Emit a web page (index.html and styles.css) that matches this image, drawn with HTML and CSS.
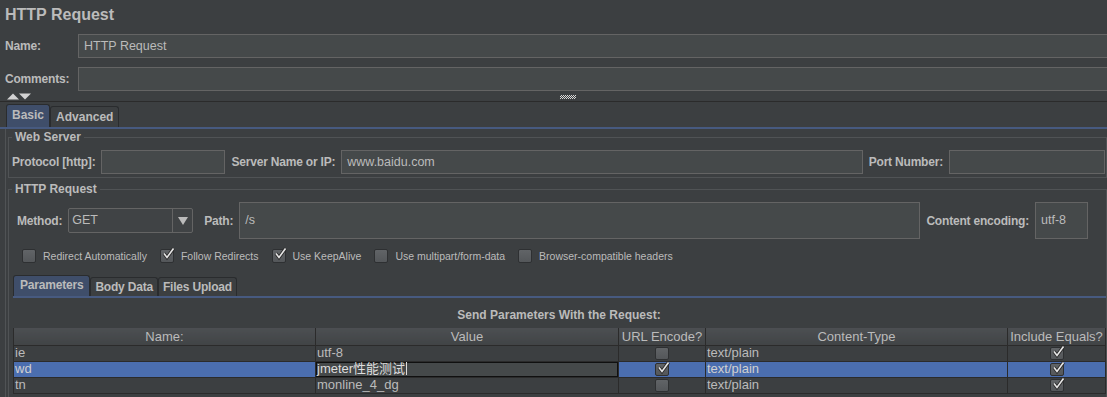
FILE: index.html
```html
<!DOCTYPE html>
<html lang="en">
<head>
  <meta charset="UTF-8">
  <meta name="viewport" content="width=device-width, initial-scale=1.0">
  <title>HTTP Request</title>
  <link rel="stylesheet" href="styles.css">
</head>
<body>
  <div class="title">HTTP Request</div>

  <div class="form-row">
    <label class="row-label">Name:</label>
    <div class="field wide">HTTP Request</div>
  </div>
  <div class="form-row">
    <label class="row-label">Comments:</label>
    <div class="field wide"></div>
  </div>

  <div class="splitter">
    <svg class="arrows" width="24" height="7" viewBox="0 0 24 7">
      <polygon points="0,6.5 6,0.5 12,6.5" fill="#d2d2d2"/>
      <polygon points="12,0.5 24,0.5 18,6.5" fill="#d2d2d2"/>
    </svg>
    <span class="grip"></span>
  </div>

  <div class="tabs">
    <div class="tab active">Basic</div>
    <div class="tab">Advanced</div>
  </div>

  <div class="tab-body">
    <fieldset class="group">
      <legend>Web Server</legend>
      <div class="line">
        <label>Protocol [http]:</label>
        <div class="field protocol"></div>
        <label>Server Name or IP:</label>
        <div class="field grow">www.baidu.com</div>
        <label>Port Number:</label>
        <div class="field port"></div>
      </div>
    </fieldset>

    <fieldset class="group">
      <legend>HTTP Request</legend>
      <div class="line method-line">
        <label>Method:</label>
        <div class="combo">
          <span class="combo-text">GET</span>
          <span class="combo-btn">
            <svg width="10" height="8" viewBox="0 0 10 8"><polygon points="0,0 10,0 5,8" fill="#bbbbbb"/></svg>
          </span>
        </div>
        <label class="path-label">Path:</label>
        <div class="field grow tall">/s</div>
        <label>Content encoding:</label>
        <div class="field tall encoding">utf-8</div>
      </div>

      <div class="options">
        <span class="opt"><i class="box"></i>Redirect Automatically</span>
        <span class="opt"><i class="box"><svg width="14" height="14" viewBox="0 0 14 14"><path d="M3 6.5 L6 10.5 L12.5 1.5" fill="none" stroke="#2a2a2a" stroke-width="3.4"/><path d="M3 6.5 L6 10.5 L12.5 1.5" fill="none" stroke="#e6e6e6" stroke-width="1.6"/></svg></i>Follow Redirects</span>
        <span class="opt"><i class="box"><svg width="14" height="14" viewBox="0 0 14 14"><path d="M3 6.5 L6 10.5 L12.5 1.5" fill="none" stroke="#2a2a2a" stroke-width="3.4"/><path d="M3 6.5 L6 10.5 L12.5 1.5" fill="none" stroke="#e6e6e6" stroke-width="1.6"/></svg></i>Use KeepAlive</span>
        <span class="opt"><i class="box"></i>Use multipart/form-data</span>
        <span class="opt"><i class="box"></i>Browser-compatible headers</span>
      </div>

      <div class="tabs inner">
        <div class="tab active">Parameters</div>
        <div class="tab">Body Data</div>
        <div class="tab">Files Upload</div>
      </div>

      <div class="params">
        <div class="params-title">Send Parameters With the Request:</div>
        <table class="params-table">
          <colgroup>
            <col style="width: 302px">
            <col style="width: 303px">
            <col style="width: 87px">
            <col style="width: 302px">
            <col style="width: 98px">
          </colgroup>
          <thead>
            <tr>
              <th>Name:</th>
              <th>Value</th>
              <th>URL Encode?</th>
              <th>Content-Type</th>
              <th>Include Equals?</th>
            </tr>
          </thead>
          <tbody>
            <tr>
              <td>ie</td>
              <td>utf-8</td>
              <td class="check-cell"><i class="box small"></i></td>
              <td>text/plain</td>
              <td class="check-cell"><i class="box small"><svg width="14" height="14" viewBox="0 0 14 14"><path d="M3 6.5 L6 10.5 L12.5 1.5" fill="none" stroke="#2a2a2a" stroke-width="3.4"/><path d="M3 6.5 L6 10.5 L12.5 1.5" fill="none" stroke="#e6e6e6" stroke-width="1.6"/></svg></i></td>
            </tr>
            <tr class="selected">
              <td>wd</td>
              <td class="editing">jmeter性能测试<span class="caret"></span></td>
              <td class="check-cell"><i class="box small"><svg width="14" height="14" viewBox="0 0 14 14"><path d="M3 6.5 L6 10.5 L12.5 1.5" fill="none" stroke="#2a2a2a" stroke-width="3.4"/><path d="M3 6.5 L6 10.5 L12.5 1.5" fill="none" stroke="#e6e6e6" stroke-width="1.6"/></svg></i></td>
              <td>text/plain</td>
              <td class="check-cell"><i class="box small"><svg width="14" height="14" viewBox="0 0 14 14"><path d="M3 6.5 L6 10.5 L12.5 1.5" fill="none" stroke="#2a2a2a" stroke-width="3.4"/><path d="M3 6.5 L6 10.5 L12.5 1.5" fill="none" stroke="#e6e6e6" stroke-width="1.6"/></svg></i></td>
            </tr>
            <tr>
              <td>tn</td>
              <td>monline_4_dg</td>
              <td class="check-cell"><i class="box small"></i></td>
              <td>text/plain</td>
              <td class="check-cell"><i class="box small"><svg width="14" height="14" viewBox="0 0 14 14"><path d="M3 6.5 L6 10.5 L12.5 1.5" fill="none" stroke="#2a2a2a" stroke-width="3.4"/><path d="M3 6.5 L6 10.5 L12.5 1.5" fill="none" stroke="#e6e6e6" stroke-width="1.6"/></svg></i></td>
            </tr>
          </tbody>
        </table>
      </div>
    </fieldset>
  </div>
</body>
</html>
```

FILE: styles.css
```css
* {
  box-sizing: border-box;
}

body {
  margin: 0;
  width: 1107px;
  height: 397px;
  overflow: hidden;
  background: #3c3f41;
  color: #bbbbbb;
  font-family: "Liberation Sans", Arial, "Noto Sans CJK SC", sans-serif;
  font-size: 12px;
}

label {
  font-weight: bold;
  letter-spacing: -0.2px;
  white-space: nowrap;
}

.title {
  height: 34px;
  padding: 5px 0 0 5px;
  font-size: 16px;
  font-weight: bold;
  line-height: 19px;
}

.form-row {
  display: flex;
  align-items: center;
  padding-left: 5px;
}

.form-row + .form-row {
  margin-top: 9px;
}

.row-label {
  width: 73px;
}

.field {
  height: 24px;
  padding: 0 5px;
  background: #45494a;
  border: 1px solid #646464;
  font-size: 12.5px;
  line-height: 22px;
  white-space: nowrap;
}

.field.wide {
  flex: 1;
  margin-right: -12px;
}

.splitter {
  display: flex;
  align-items: flex-start;
  height: 11px;
  padding: 2px 0 0 7px;
  border-bottom: 1px solid #2b2b2b;
}

.grip {
  width: 16px;
  height: 4px;
  margin: 2px 0 0 529px;
  background: repeating-conic-gradient(#d8d8d8 0 25%, transparent 0 50%) 0 0 / 2px 2px;
}

.tabs {
  display: flex;
  align-items: flex-end;
  height: 25px;
  margin-top: 2px;
  padding-left: 6px;
  border-bottom: 2px solid #475a80;
}

.tab {
  height: 21px;
  padding: 0 5px;
  border: 1px solid #2a2c2e;
  border-bottom: none;
  border-radius: 3px 3px 0 0;
  font-weight: bold;
  line-height: 20px;
  white-space: nowrap;
}

.tab.active {
  height: 23px;
  background: #3f4e6a;
}

.tab-body {
  margin-left: 5px;
  padding: 1px 0 0 2px;
  border-left: 1px solid #505355;
}

.group {
  margin: 0;
  min-width: 0;
  padding: 6px 0 3px 3px;
  border: 1px solid #505355;
}

.group + .group {
  margin-top: 4px;
}

.group legend {
  padding: 0 3px;
  font-weight: bold;
  line-height: 14px;
}

.line {
  display: flex;
  align-items: center;
  gap: 6px;
  padding-right: 1px;
}

.protocol {
  width: 124px;
}

.grow {
  flex: 1;
}

.port {
  width: 156px;
}

.method-line {
  padding: 0 18px 0 5px;
}

.path-label {
  margin-left: 5px;
}

.combo {
  display: flex;
  width: 125px;
  height: 25px;
  background: #404345;
  border: 1px solid #646464;
  border-radius: 2px;
}

.combo-text {
  flex: 1;
  padding-left: 3px;
  font-size: 12.5px;
  line-height: 23px;
}

.combo-btn {
  display: flex;
  align-items: center;
  justify-content: center;
  width: 20px;
  border-left: 1px solid #646464;
}

.tall {
  height: 37px;
  line-height: 35px;
}

.encoding {
  width: 53px;
}

.options {
  display: flex;
  align-items: center;
  gap: 13px;
  height: 14px;
  margin-top: 10px;
  padding-left: 10px;
  font-size: 10.5px;
}

.opt {
  display: flex;
  align-items: center;
  gap: 7px;
  white-space: nowrap;
}

.box {
  position: relative;
  display: inline-block;
  width: 14px;
  height: 14px;
  background: linear-gradient(#616467, #54575a);
  border: 1px solid #2e3032;
  border-radius: 2px;
}

.box svg {
  position: absolute;
  left: 0;
  top: -3px;
}

.box.small {
  width: 14px;
  height: 13px;
  vertical-align: middle;
}

.tabs.inner {
  height: 23px;
  margin: 12px 0 0 1px;
  padding-left: 0;
}

.tabs.inner .tab {
  height: 19px;
  padding: 0 4px;
  letter-spacing: -0.2px;
  line-height: 18px;
}

.tabs.inner .tab.active {
  height: 21px;
  padding: 0 6px;
}

.params-title {
  padding-top: 10px;
  text-align: center;
  font-weight: bold;
  line-height: 14px;
}

.params-table {
  width: 1092px;
  margin: 6px 0 0 1px;
  border-collapse: collapse;
  table-layout: fixed;
  border-left: 1px solid #2b2b2b;
  font-size: 13px;
}

.params-table th {
  height: 17px;
  padding: 0;
  font-weight: normal;
  line-height: 15px;
  background: linear-gradient(#4c4f52, #414446);
  border-right: 1px solid #2b2b2b;
  border-bottom: 1px solid #2b2b2b;
}

.params-table td {
  height: 16px;
  padding: 0 1px;
  line-height: 14px;
  white-space: nowrap;
  overflow: hidden;
  border-right: 1px solid #2b2b2b;
  border-bottom: 1px solid #2b2b2b;
}

.check-cell {
  text-align: center;
}

.selected td {
  background: #4b6eaf;
  color: #d0d0d0;
}

.selected td.editing {
  background: #45494a;
  color: #dddddd;
  box-shadow: inset 0 0 0 1px #101010;
}

.caret {
  display: inline-block;
  width: 1px;
  height: 13px;
  margin-left: 1px;
  vertical-align: -2px;
  background: #dddddd;
}
```
